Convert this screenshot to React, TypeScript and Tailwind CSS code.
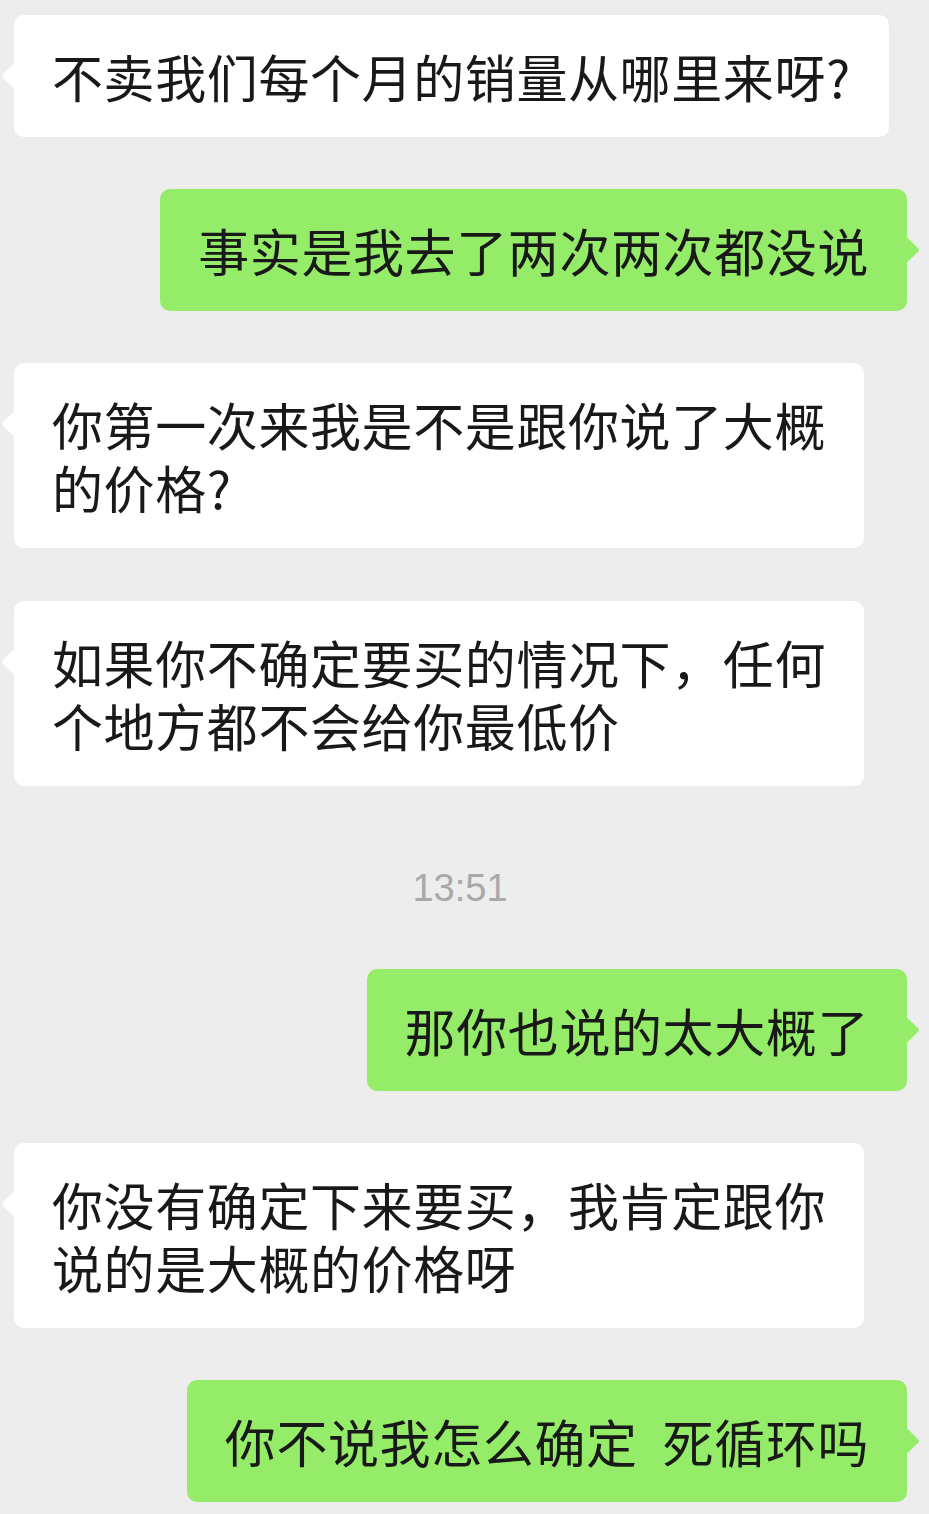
import React from 'react';

type Side = 'left' | 'right';

interface Message {
  side: Side;
  lines: React.ReactNode[];
}

const messages: (Message | { time: string })[] = [
  { side: 'left', lines: ['不卖我们每个月的销量从哪里来呀?'] },
  { side: 'right', lines: ['事实是我去了两次两次都没说'] },
  { side: 'left', lines: ['你第一次来我是不是跟你说了大概', '的价格?'] },
  { side: 'left', lines: ['如果你不确定要买的情况下，任何', '个地方都不会给你最低价'] },
  { time: '13:51' },
  { side: 'right', lines: ['那你也说的太大概了'] },
  { side: 'left', lines: ['你没有确定下来要买，我肯定跟你', '说的是大概的价格呀'] },
  {
    side: 'right',
    lines: [
      <>
        你不说我怎么确定
        <span className="inline-block w-[25px]" />
        死循环吗
      </>,
    ],
  },
];

const Bubble: React.FC<Message> = ({ side, lines }) => {
  const isLeft = side === 'left';
  return (
    <div
      className={`relative rounded-[10px] pt-[30px] pb-[29px] text-[51px] leading-[63px] tracking-[0.6px] text-[#191919] whitespace-nowrap
        ${isLeft ? 'self-start ml-[14px] bg-white pl-[38px] pr-[38px]' : 'self-end mr-[22px] bg-[#95ec69] pl-[38px] pr-[38px]'}`}
    >
      {/* tail */}
      <span
        className={`absolute top-[52px] w-[18px] h-[18px] rotate-45 rounded-[2px]
          ${isLeft ? 'left-[-9px] bg-white' : 'right-[-9px] bg-[#95ec69]'}`}
      />
      <div className="relative">
        {lines.map((line, i) => (
          <div key={i}>{line}</div>
        ))}
      </div>
    </div>
  );
};

export default function App() {
  return (
    <div
      className="w-[929px] min-h-[1514px] bg-[#ededed] pt-[15px] pb-[12px] flex flex-col gap-[52.2px]"
      style={{ fontFamily: '"Noto Sans CJK SC", "Noto Sans", sans-serif' }}
    >
      {messages.map((m, i) =>
        'time' in m ? (
          <div
            key={i}
            className="h-[79px] pt-[31px] pr-[9px] text-center text-[38px] leading-[38px] text-[#a9a9a9]"
            style={{ fontFamily: '"Liberation Sans", "Noto Sans", sans-serif' }}
          >
            {m.time}
          </div>
        ) : (
          <Bubble key={i} side={m.side} lines={m.lines} />
        )
      )}
    </div>
  );
}
